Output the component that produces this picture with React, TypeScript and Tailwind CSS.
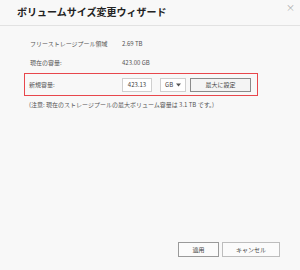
export default function App() {
  return (
    <div
      className="w-[300px] h-[270px] bg-[#f8f8f8] flex flex-col text-[#555]"
      style={{ fontFamily: '"Noto Sans CJK JP", "Noto Sans", sans-serif' }}
    >
      <div className="h-[26px] border-b border-[#e2e2e2] flex items-start justify-between pl-[17px] pr-[5px]">
        <h1 className="mt-[5px] text-[10px] leading-[14px] font-bold text-[#222]">ボリュームサイズ変更ウィザード</h1>
        <span className="mt-[3px] text-[9px] leading-[9px] text-[#aaa]">×</span>
      </div>

      <div className="flex flex-col pt-[8px] text-[6px]">
        <div className="h-[19px] flex items-center pl-[30px]">
          <span className="w-[92px]">フリーストレージプール領域</span>
          <span>2.69 TB</span>
        </div>
        <div className="h-[19px] flex items-center pl-[30px]">
          <span className="w-[92px]">現在の容量:</span>
          <span>423.00 GB</span>
        </div>
        <div className="mt-[1px] ml-[24px] w-[234px] h-[23px] ring-1 ring-inset ring-[#e8474c] flex items-center pl-[5px]">
          <span className="w-[93px]">新規容量:</span>
          <div className="w-[30px] h-[14px] bg-white border border-[#cfcfcf] flex items-center justify-center text-[#444]">
            423.13
          </div>
          <div className="ml-[8px] w-[26px] h-[14px] bg-white border border-[#cfcfcf] flex items-center justify-between pl-[4px] pr-[4px] text-[#444]">
            <span>GB</span>
            <svg width="5" height="4" viewBox="0 0 5 4">
              <path d="M0 0.5 L5 0.5 L2.5 3.5 Z" fill="#555" />
            </svg>
          </div>
          <button className="ml-[4px] w-[61px] h-[14px] bg-[#f4f4f4] border border-[#8a8a8a] flex items-center justify-center text-[#444]">
            最大に設定
          </button>
        </div>
        <div className="h-[14px] mt-[1px] flex items-center pl-[29px]">
          (注意: 現在のストレージプールの最大ボリューム容量は 3.1 TB です。)
        </div>
      </div>

      <div className="mt-auto mb-[13px] flex justify-end gap-[3px] pr-[20px] text-[6px]">
        <button className="w-[41px] h-[15px] bg-[#fbfbfb] border border-[#9a9a9a] text-[#444]">適用</button>
        <button className="w-[58px] h-[15px] bg-[#fbfbfb] border border-[#bdbdbd] text-[#444]">キャンセル</button>
      </div>
    </div>
  )
}
